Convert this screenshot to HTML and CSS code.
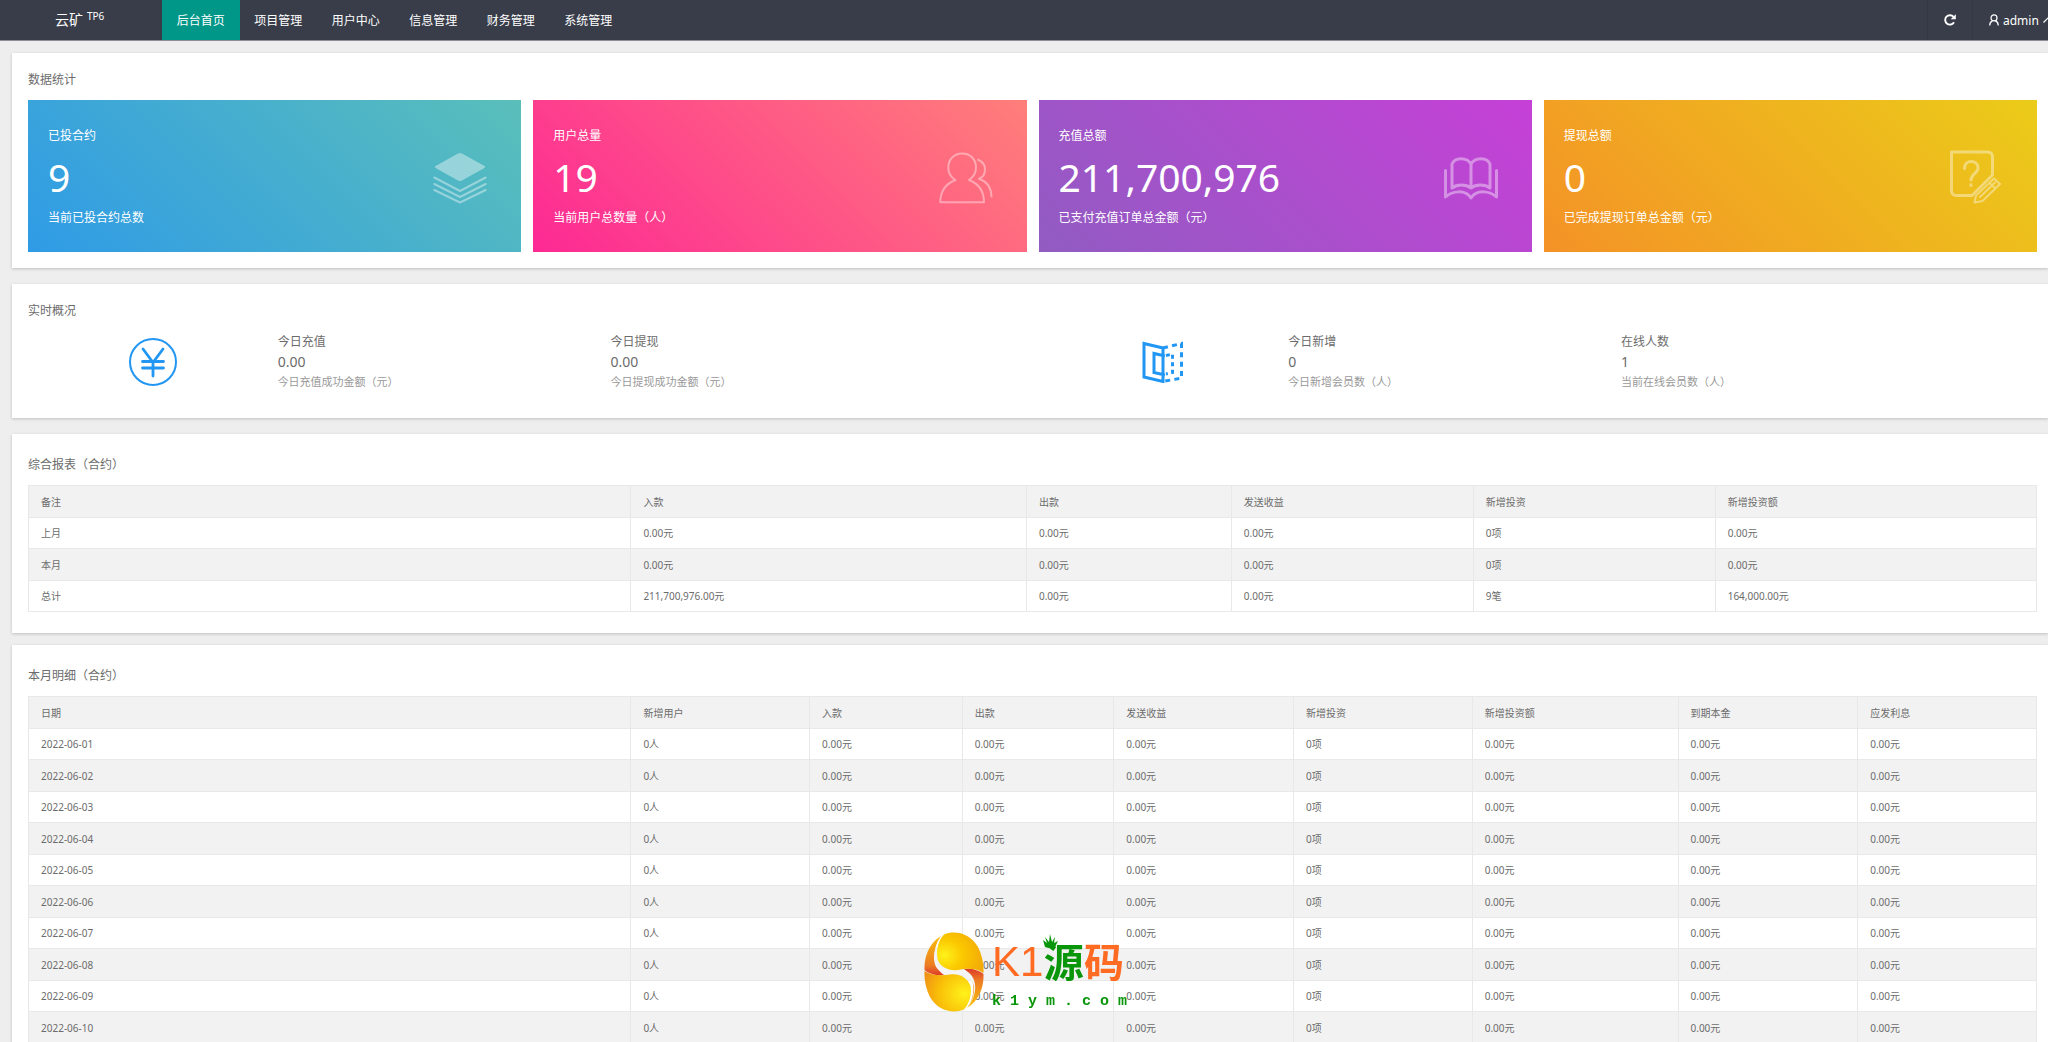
FILE: index.html
```html
<!DOCTYPE html>
<html lang="zh-CN">
<head>
<meta charset="utf-8">
<title>云矿</title>
<link rel="stylesheet" href="styles.css">
</head>
<body>
<header class="topbar">
  <a class="brand" href="#"><span>云矿</span><small>TP6</small></a>
  <nav class="menu">
    <a class="active" href="#">后台首页</a>
    <a href="#">项目管理</a>
    <a href="#">用户中心</a>
    <a href="#">信息管理</a>
    <a href="#">财务管理</a>
    <a href="#">系统管理</a>
  </nav>
  <div class="tools">
    <button class="tool refresh" type="button" aria-label="刷新">
      <svg width="12" height="12" viewBox="0 0 12 12"><path d="M10 8.200A4.700 4.700 0 1 1 9.500 2.900" fill="none" stroke="currentColor" stroke-width="1.900"/><path d="M11.800.2v5H6.700z" fill="currentColor"/></svg>
    </button>
    <button class="tool user" type="button">
      <svg width="10" height="12" viewBox="0 0 10 12" fill="none" stroke="currentColor" stroke-width="1.200"><circle cx="5" cy="3.900" r="3"/><path d="M.7 11.400C.8 8.900 2 7.400 3.600 6.600M6.400 6.600C8 7.400 9.200 8.900 9.300 11.400"/></svg>
      <span>admin</span>
      <svg width="10" height="6" viewBox="0 0 10 6" fill="none" stroke="currentColor" stroke-width="1.200"><path d="M.5 5.500 5 1l4.500 4.500"/></svg>
    </button>
  </div>
</header>

<main class="content">
  <section class="panel">
    <h2>数据统计</h2>
    <div class="tiles">
      <article class="tile blue">
        <div><h3>已投合约</h3><strong>9</strong><p>当前已投合约总数</p></div>
        <svg width="54" height="54" viewBox="0 0 54 54"><path d="M25 3.600Q27 2.500 29 3.600L51 15.800Q53.200 17 51 18.200L29 30.400Q27 31.500 25 30.400L3 18.200Q.8 17 3 15.800z" fill="currentColor" stroke="none"/><path d="M1.300 27 27 40.500 52.700 27M1.300 35 27 48.500 52.700 35" stroke="none"/><path d="M1.300 27.500 27 41 52.700 27.500M1.300 34 27 47 52.700 34M1.300 40 27 52.500 52.700 40"/></svg>
      </article>
      <article class="tile pink">
        <div><h3>用户总量</h3><strong>19</strong><p>当前用户总数量（人）</p></div>
        <svg width="54" height="54" viewBox="0 0 54 54"><path d="M16.500 30C12 27.500 9.300 23 9.300 17.500 9.300 9.500 15 3.500 23.200 3.500S37 9.500 37 17.500C37 23 34.500 27 30 30 39 33.500 45 41 45 52.300H1.300C1.300 41 7.500 33.500 16.500 30zM39 9.800C43.500 11.500 46 15 46 19.500 46 24 43.500 27.500 40 28.800 47 31 52 37 52.500 46.500"/></svg>
      </article>
      <article class="tile purple">
        <div><h3>充值总额</h3><strong>211,700,976</strong><p>已支付充值订单总金额（元）</p></div>
        <svg width="54" height="54" viewBox="0 0 54 54" class="bold"><path d="M27 14C23 7 11 7 8 14V38C13 34 22 34 27 38 32 34 41 34 46 38V14C43 7 31 7 27 14zM27 14V38M1.500 20.500V47C8 41 21 39 27 48 33 39 46 41 52.500 47V20.500"/></svg>
      </article>
      <article class="tile orange">
        <div><h3>提现总额</h3><strong>0</strong><p>已完成提现订单总金额（元）</p></div>
        <svg width="54" height="54" viewBox="0 0 54 54" class="bold"><path d="M2.500 2H38.500Q43.500 2 43.500 7V25L23 45.500H7.500Q2.500 45.500 2.500 40.500zM15.500 18.500C15.500 9 29 9.500 29 18 29 23.500 22 24 22 30M22 34.500V35.500"/><path d="M25.500 52.500 27 45.500 45 28.500 51 34 33.500 51zM31 47 46 32.500M41 33.500 46.500 38.500" stroke-width="2"/></svg>
      </article>
    </div>
  </section>

  <section class="panel">
    <h2>实时概况</h2>
    <div class="overview">
      <div class="group">
        <svg width="48" height="48" viewBox="0 0 48 48"><circle cx="24" cy="24" r="23" stroke-width="2"/><path d="M14 11 24 24.500 34 11M24 24.500V38M13.500 23.500H34.500M13.500 30H34.500" stroke-width="2.800" stroke-linecap="round"/></svg>
        <dl><dt>今日充值</dt><dd class="value">0.00</dd><dd>今日充值成功金额（元）</dd></dl>
        <dl><dt>今日提现</dt><dd class="value">0.00</dd><dd>今日提现成功金额（元）</dd></dl>
      </div>
      <div class="group">
        <svg width="42" height="42" viewBox="0 0 42 42" stroke-width="3"><path d="M2 2.500 21 7V40.500L2 36zM23 15 12 12.500V31.500L23 34"/><path d="M21 7 39.500 2.500V37L21 40.500" stroke-dasharray="5 4.300"/><path d="M24 14.500 30.500 13V31.500L24 33" stroke-dasharray="4 3.500"/></svg>
        <dl><dt>今日新增</dt><dd class="value">0</dd><dd>今日新增会员数（人）</dd></dl>
        <dl><dt>在线人数</dt><dd class="value">1</dd><dd>当前在线会员数（人）</dd></dl>
      </div>
    </div>
  </section>

  <section class="panel report">
    <h2>综合报表（合约）</h2>
    <table class="summary">
      <thead><tr><th>备注</th><th>入款</th><th>出款</th><th>发送收益</th><th>新增投资</th><th>新增投资额</th></tr></thead>
      <tbody>
        <tr><td>上月</td><td>0.00元</td><td>0.00元</td><td>0.00元</td><td>0项</td><td>0.00元</td></tr>
        <tr><td>本月</td><td>0.00元</td><td>0.00元</td><td>0.00元</td><td>0项</td><td>0.00元</td></tr>
        <tr><td>总计</td><td>211,700,976.00元</td><td>0.00元</td><td>0.00元</td><td>9笔</td><td>164,000.00元</td></tr>
      </tbody>
    </table>
  </section>

  <section class="panel report">
    <h2>本月明细（合约）</h2>
    <table class="daily">
      <thead><tr><th>日期</th><th>新增用户</th><th>入款</th><th>出款</th><th>发送收益</th><th>新增投资</th><th>新增投资额</th><th>到期本金</th><th>应发利息</th></tr></thead>
      <tbody>
        <tr><td>2022-06-01</td><td>0人</td><td>0.00元</td><td>0.00元</td><td>0.00元</td><td>0项</td><td>0.00元</td><td>0.00元</td><td>0.00元</td></tr>
        <tr><td>2022-06-02</td><td>0人</td><td>0.00元</td><td>0.00元</td><td>0.00元</td><td>0项</td><td>0.00元</td><td>0.00元</td><td>0.00元</td></tr>
        <tr><td>2022-06-03</td><td>0人</td><td>0.00元</td><td>0.00元</td><td>0.00元</td><td>0项</td><td>0.00元</td><td>0.00元</td><td>0.00元</td></tr>
        <tr><td>2022-06-04</td><td>0人</td><td>0.00元</td><td>0.00元</td><td>0.00元</td><td>0项</td><td>0.00元</td><td>0.00元</td><td>0.00元</td></tr>
        <tr><td>2022-06-05</td><td>0人</td><td>0.00元</td><td>0.00元</td><td>0.00元</td><td>0项</td><td>0.00元</td><td>0.00元</td><td>0.00元</td></tr>
        <tr><td>2022-06-06</td><td>0人</td><td>0.00元</td><td>0.00元</td><td>0.00元</td><td>0项</td><td>0.00元</td><td>0.00元</td><td>0.00元</td></tr>
        <tr><td>2022-06-07</td><td>0人</td><td>0.00元</td><td>0.00元</td><td>0.00元</td><td>0项</td><td>0.00元</td><td>0.00元</td><td>0.00元</td></tr>
        <tr><td>2022-06-08</td><td>0人</td><td>0.00元</td><td>0.00元</td><td>0.00元</td><td>0项</td><td>0.00元</td><td>0.00元</td><td>0.00元</td></tr>
        <tr><td>2022-06-09</td><td>0人</td><td>0.00元</td><td>0.00元</td><td>0.00元</td><td>0项</td><td>0.00元</td><td>0.00元</td><td>0.00元</td></tr>
        <tr><td>2022-06-10</td><td>0人</td><td>0.00元</td><td>0.00元</td><td>0.00元</td><td>0项</td><td>0.00元</td><td>0.00元</td><td>0.00元</td></tr>
      </tbody>
    </table>
  </section>
</main>

<aside class="watermark">
  <svg width="60" height="80" viewBox="0 0 60 80">
    <defs>
      <radialGradient id="upper" cx="16%" cy="56%" r="85%"><stop offset="0" stop-color="#fff21a"/><stop offset=".45" stop-color="#fbc900"/><stop offset="1" stop-color="#f2aa08"/></radialGradient>
      <radialGradient id="lower" cx="86%" cy="56%" r="95%"><stop offset="0" stop-color="#fff21a"/><stop offset=".6" stop-color="#f9be08"/><stop offset="1" stop-color="#ef9016"/></radialGradient>
      <linearGradient id="rim" x1="0" y1="0" x2="0" y2="1"><stop offset="0" stop-color="#f9bd0a"/><stop offset=".75" stop-color="#ec7b24"/><stop offset="1" stop-color="#dd3b2b"/></linearGradient>
      <linearGradient id="rim2" x1="0" y1="1" x2="0" y2="0"><stop offset="0" stop-color="#fbc30a"/><stop offset=".7" stop-color="#ec7b24"/><stop offset="1" stop-color="#dd3b2b"/></linearGradient>
    </defs>
    <path d="M17 4C5 11 0 25 .5 38 5 42 13 44 20 43 9 35 7 18 17 4z" fill="url(#rim)"/>
    <path d="M43 76C55 69 60 55 59.500 42 55 38 47 36 40 37 51 45 53 62 43 76z" fill="url(#rim2)"/>
    <path d="M18.500 3.500C8 17 6 36 20 41.500 26 44 34 41 40 43 52 47 54 62 42.500 76.500 55 63 54 43 40 38 34 36.500 26 38.500 20 36.500 8 33 9 15 18.500 3.500z" fill="#f5f5f5"/>
    <path d="M20 2.500C31-2 46 1 54 15 58 23 60 32 59.500 41 54 37 44 36 37 37.500 27 40 16 36 13.500 27 12 18 14 9 20 2.500z" fill="url(#upper)"/>
    <path d="M40 77.500C29 82 14 79 6 65 2 57 0 48 .5 39 6 43 17 44 26 42.500 35 41 44 46 46.500 54 48 63 45 72 40 77.500z" fill="url(#lower)"/>
  </svg>
  <div class="mark">
    <div class="mark-name"><span class="latin">K1</span><span class="yuan">源</span><span class="ma">码</span></div>
    <div class="mark-url">k 1 y m . c o m</div>
    <svg class="crown" width="16" height="16" viewBox="0 0 16 16"><path d="M3 14 1 7l4 3-2-6 4 5L8 1l2 8 3-5-1 6 4-2-3 6q-5 2-10 0z" fill="#0a960a"/></svg>
  </div>
</aside>
</body>
</html>
```

FILE: styles.css
```css
* { box-sizing: border-box; }

body {
  display: flex;
  flex-direction: column;
  height: 100vh;
  margin: 0;
  overflow: hidden;
  background: #eee;
  color: #6c6c6c;
  font: 12px/20px "Noto Sans", "Noto Sans CJK SC", sans-serif;
}

h2, h3, p, dl, dd { margin: 0; font-size: inherit; font-weight: 400; }

/* top bar */
.topbar {
  display: flex;
  flex: none;
  height: 41px;
  background: #393d49;
  border-bottom: 1px solid #8d9097;
  color: #fff;
}

.brand {
  display: flex;
  gap: 4px;
  width: 162px;
  padding-left: 55px;
  color: #fff;
  font-size: 14px;
  line-height: 40px;
  text-decoration: none;
}
.brand small { font-size: 10px; line-height: 32px; }

.menu {
  display: grid;
  grid-template-columns: repeat(6, 1fr);
  width: 465px;
}
.menu a {
  height: 40px;
  color: #fff;
  line-height: 42px;
  text-align: center;
  text-decoration: none;
}
.menu .active { background: #009688; }

.tools { display: flex; margin-left: auto; }
.tool {
  display: flex;
  align-items: center;
  gap: 4px;
  padding: 0;
  background: none;
  border: 0;
  border-left: 1px solid #343843;
  color: #fff;
  font: inherit;
}
.tool svg { flex: none; }
.refresh { justify-content: center; width: 45px; }
.user { width: 76px; padding-left: 16px; overflow: hidden; }
.user span { padding-top: 1px; }

/* panels */
.content {
  flex: 1;
  min-height: 0;
  padding: 12px 0 0 12px;
  overflow: auto;
  scrollbar-width: none;
}

.panel {
  margin-bottom: 16px;
  padding: 17px 11px 16px 16px;
  background: #fff;
  box-shadow: 0 1px 3px rgba(0, 0, 0, .2);
}
.panel h2 { margin-bottom: 10px; }

/* statistic tiles */
.tiles {
  display: grid;
  grid-template-columns: repeat(4, 1fr);
  gap: 12px;
}
.tile {
  display: flex;
  align-items: center;
  justify-content: space-between;
  height: 152px;
  padding: 2px 34px 0 20px;
  color: #fff;
}
.tile strong {
  display: block;
  margin: 8px 0;
  font-size: 39px;
  font-weight: 400;
  line-height: 46px;
}
.tile svg {
  fill: none;
  stroke: currentColor;
  stroke-width: 2;
  stroke-linecap: round;
  stroke-linejoin: round;
  opacity: .4;
}
.tile .bold { stroke-width: 3; }
.blue { background: linear-gradient(45deg, #2f9be6, #5abfba); }
.pink { background: linear-gradient(45deg, #fd2994, #ff7f7a); }
.purple { background: linear-gradient(45deg, #915cc2, #c640d7); }
.orange { background: linear-gradient(45deg, #f49227, #ebcc19); }

/* realtime overview */
.overview {
  display: grid;
  grid-template-columns: 1fr 1fr;
  gap: 12px;
  padding: 1px 0 10px;
}
.group {
  display: grid;
  grid-template-columns: 3fr 4fr 4fr 1fr;
  align-items: center;
}
.group svg {
  justify-self: center;
  fill: none;
  stroke: #2196f3;
}
.group dd { color: #999; font-size: 11px; }
.group .value { color: #6c6c6c; font-size: 14px; }

/* reports */
.report { margin-bottom: 12px; padding-top: 21px; padding-bottom: 21px; }

table {
  width: 100%;
  border-collapse: collapse;
  table-layout: fixed;
  font-size: 10px;
}
th, td {
  padding: 5px 12px;
  border: 1px solid #e8e8e8;
  font-weight: 400;
  text-align: left;
}
th { height: 32px; background: #f2f2f2; }
td { height: 31px; }
tbody tr:nth-child(even) { background: #f2f2f2; }
tbody tr:nth-child(even) td { height: 32px; }

th:first-child { width: 30%; }
.summary th:nth-child(2) { width: 19.7%; }
.summary th:nth-child(3) { width: 10.2%; }
.summary th:nth-child(4), .summary th:nth-child(5) { width: 12.05%; }
.daily th:nth-child(2), .daily th:nth-child(6) { width: 8.9%; }
.daily th:nth-child(3) { width: 7.6%; }
.daily th:nth-child(4) { width: 7.55%; }
.daily th:nth-child(5), .daily th:nth-child(8) { width: 8.95%; }
.daily th:nth-child(7) { width: 10.25%; }

/* site watermark over the page */
.watermark {
  position: fixed;
  bottom: 30px;
  left: 50%;
  display: flex;
  gap: 8px;
  width: 200px;
  height: 80px;
  margin-left: -100px;
  pointer-events: none;
}
.watermark > svg { flex: none; }
.mark { position: relative; width: 132px; }
.mark-name {
  display: flex;
  justify-content: space-between;
  height: 60px;
  color: #ff6b22;
  font-size: 40px;
  line-height: 60px;
}
.mark-name .latin { font-family: "Liberation Sans Narrow", "Liberation Sans", sans-serif; font-size: 42px; }
.mark-name .yuan { color: #0a960a; font-weight: 700; }
.mark-name .ma { font-weight: 700; }
.mark-url {
  color: #0a960a;
  font: 700 15px/20px "Liberation Mono", monospace;
  white-space: nowrap;
}
.crown { position: absolute; top: 1px; left: 50px; }
```
